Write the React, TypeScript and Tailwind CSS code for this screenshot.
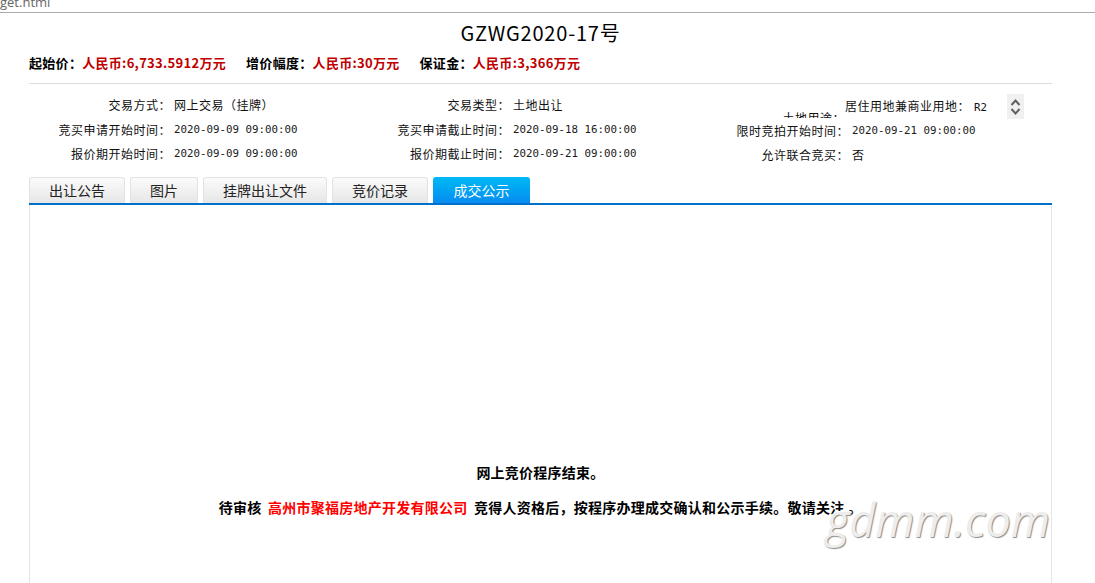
import React from 'react';

const cjk = { fontFamily: '"Noto Sans CJK SC", sans-serif' };

const tabs = [
  { label: '出让公告', width: 'w-[96px]' },
  { label: '图片', width: 'w-[68px]' },
  { label: '挂牌出让文件', width: 'w-[124px]' },
  { label: '竞价记录', width: 'w-[96px]' },
];

function Label({ children }: { children: React.ReactNode }) {
  return <span className="w-[145px] shrink-0 pr-[3px] text-right">{children}</span>;
}

function Time({ children }: { children: React.ReactNode }) {
  return <span className="font-['DejaVu_Sans_Mono',monospace] text-[10.8px] tracking-normal text-[#1a1a1a]">{children}</span>;
}

function Cell({ label, low, children }: { label: string; low?: boolean; children: React.ReactNode }) {
  return (
    <div className={low ? 'flex w-[339px] items-center pt-[2px]' : 'flex w-[339px] items-center'}>
      <Label>{label}</Label>
      {children}
    </div>
  );
}

function Fee({ label, value }: { label: string; value: string }) {
  return (
    <span>
      {label}：<span className="text-[#c00000]">{value}</span>
    </span>
  );
}

export default function App() {
  return (
    <div className="relative h-[583px] w-[1095px] overflow-hidden bg-white text-[#111]" style={cjk}>
      {/* browser strip, cut off at the top */}
      <div className="h-[13px] overflow-hidden border-b border-[#ababab]">
        <div className="mt-[-7px] font-['Open_Sans',sans-serif] text-[13px] leading-[18px] text-[#666]">get.html</div>
      </div>

      <div className="mx-[29px] w-[1023px]">
        <h1 className="pt-[7px] text-center text-[20px] leading-[26px] tracking-[0.8px] text-black">GZWG2020-17号</h1>

        <div className="mt-[8px] flex h-[17px] items-center gap-[20px] text-[13px] leading-[17px] font-bold tracking-[0.3px] text-black">
          <Fee label="起始价" value="人民币:6,733.5912万元" />
          <Fee label="增价幅度" value="人民币:30万元" />
          <Fee label="保证金" value="人民币:3,366万元" />
        </div>

        <div className="mt-[12px] border-t border-[#dcdcdc] pt-[10px] text-[12px] tracking-[0.5px]">
          <div className="flex h-[24px] items-center pb-[3px]">
            <Cell label="交易方式：">
              <span>网上交易（挂牌）</span>
            </Cell>
            <Cell label="交易类型：">
              <span>土地出让</span>
            </Cell>
            <div className="flex h-[25px] items-start self-start">
              <span className="h-[24px] w-[138px] shrink-0 overflow-hidden pt-[15px] text-right">土地用途：</span>
              <div className="flex w-[179px] items-start justify-between">
                <span className="pt-[3px] whitespace-nowrap">
                  居住用地兼商业用地：<span className="ml-[4px] font-['DejaVu_Sans_Mono',monospace] text-[10.8px] tracking-normal">R2</span>
                </span>
                <span className="flex h-[25px] w-[17px] flex-col items-center justify-center bg-[#f0f0f0]">
                  <svg width="11" height="9" viewBox="0 0 11 9" fill="none" stroke="#606060" strokeWidth="2">
                    <path d="M1.5 7 5.5 2.5 9.5 7" />
                  </svg>
                  <svg width="11" height="9" viewBox="0 0 11 9" fill="none" stroke="#606060" strokeWidth="2">
                    <path d="M1.5 2 5.5 6.5 9.5 2" />
                  </svg>
                </span>
              </div>
            </div>
          </div>
          <div className="flex h-[24px] items-center">
            <Cell label="竞买申请开始时间：">
              <Time>2020-09-09 09:00:00</Time>
            </Cell>
            <Cell label="竞买申请截止时间：">
              <Time>2020-09-18 16:00:00</Time>
            </Cell>
            <Cell label="限时竞拍开始时间：" low>
              <Time>2020-09-21 09:00:00</Time>
            </Cell>
          </div>
          <div className="flex h-[24px] items-center">
            <Cell label="报价期开始时间：">
              <Time>2020-09-09 09:00:00</Time>
            </Cell>
            <Cell label="报价期截止时间：">
              <Time>2020-09-21 09:00:00</Time>
            </Cell>
            <Cell label="允许联合竞买：" low>
              <span>否</span>
            </Cell>
          </div>
        </div>

        <div className="mt-[11px] flex h-[28px] gap-[5px] border-b-2 border-[#0070c9]">
          {tabs.map((tab) => (
            <div
              key={tab.label}
              className={`${tab.width} flex h-[26px] items-center justify-center rounded-t-[3px] border border-b-0 border-[#e2e2e2] bg-gradient-to-b from-[#fbfbfb] to-[#e6e6e6] text-[14px] text-[#222]`}
            >
              {tab.label}
            </div>
          ))}
          <div className="flex h-[26px] w-[97px] items-center justify-center rounded-t-[3px] bg-gradient-to-b from-[#00b9f5] to-[#0a8cf0] text-[14px] text-white">
            成交公示
          </div>
        </div>

        <div className="h-[378px] border-x border-[#e4e4e4] pt-[257px] text-center text-[14px] leading-[20px] font-bold tracking-[0.25px] text-black">
          <p>网上竞价程序结束。</p>
          <p className="mt-[15px]">
            待审核 <span className="mx-[3px] text-[#ff0000]">高州市聚福房地产开发有限公司</span> 竞得人资格后，按程序办理成交确认和公示手续。敬请关注 。
          </p>
        </div>
      </div>

      {/* site watermark over the page */}
      <div className="absolute top-[489px] left-[826px] font-['Open_Sans',sans-serif] text-[45px] leading-[62px] font-normal text-[#ededed] italic [text-shadow:1px_1px_1px_#8a8a8a,0_-1px_0_#fff]">
        gdmm.com
      </div>
    </div>
  );
}
